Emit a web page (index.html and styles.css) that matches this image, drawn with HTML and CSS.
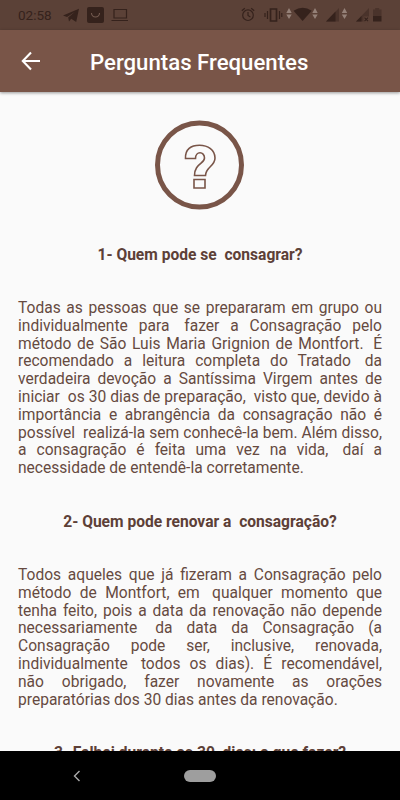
FILE: index.html
```html
<!DOCTYPE html>
<html lang="pt-BR">
<head>
    <meta charset="UTF-8">
    <meta name="viewport" content="width=device-width, initial-scale=1.0">
    <title>Perguntas Frequentes</title>
    <link rel="stylesheet" href="styles.css">
</head>
<body>

<div class="app">
    <div class="status-bar">
        <span class="clock">02:58</span>
        <svg class="status-icons" width="382" height="30" viewBox="18 0 382 30">
            <!-- telegram -->
            <path d="M63 15.5 79 8.8 76.2 22 71.2 18.8 69 21.6 68.2 17.6 75 11.8 67 16.9z"/>
            <!-- bag -->
            <rect x="87" y="7" width="17" height="16" rx="2"/>
            <path class="bag-line" d="M91.5 13a4 4 0 0 0 8 0"/>
            <!-- laptop -->
            <path class="line" d="M114 9.5h12.5v8.5H114zM111.5 20.5H128"/>
            <!-- alarm -->
            <circle class="line" cx="248" cy="15.2" r="5.3"/>
            <path class="line" d="M248 12v3.5l2.4 1.4M241.8 10.7l3-2.5M254.2 10.7l-3-2.5"/>
            <!-- vibrate -->
            <path class="line thick" d="M270.5 9h6v12h-6z"/>
            <path class="line" d="M267.5 11v8M265 13v4M279.5 11v8M281.8 13v4"/>
            <!-- wifi -->
            <path d="M293.5 10.8q9.3-6 18.2 0L302.6 21z"/>
            <!-- arrows -->
            <path class="arrow" d="M289 8l2.7 5h-5.4zM289 19l2.7-4.5h-5.4zM315 8l2.7 5h-5.4zM315 19l2.7-4.5h-5.4zM344.5 8l2.7 5h-5.4zM344.5 19l2.7-4.5h-5.4z"/>
            <!-- signal -->
            <path class="faint" d="M339 8v13.5h-13zM369 8v13.5h-13z"/>
            <path d="M335.5 11.6v9.9H326zM361.5 16v5.5H356z"/>
            <path class="signal-gap" d="M363.5 16.5h6v6h-6z"/>
            <path class="line" d="M364.5 17.7l3.5 3.5M368 17.7l-3.5 3.5"/>
            <!-- battery -->
            <path class="faint" d="M373 9.5h2.2V8h4v1.5h2.3V16H373z"/>
            <path d="M373 16h8.5v5.5H373z"/>
        </svg>
    </div>

    <div class="toolbar">
        <svg class="back" width="20" height="20" viewBox="0 0 20 20">
            <path d="M19 10H2M10 1.5 1.8 10l8.2 8.5"/>
        </svg>
        <h1 class="title">Perguntas Frequentes</h1>
    </div>

    <div class="content">
        <svg class="question-icon" width="90" height="90" viewBox="0 0 90 90">
            <circle cx="44.5" cy="45" r="42"/>
            <path d="M30.5 38.5C30 29 36 25.2 44.5 25.2S60 30 60 38C60 46.5 50.5 47 50.5 55.5H39.5C39.5 43.5 49.5 44 49.5 38C49.5 31 40.5 31 40.5 38.5zM39 59.5h11v8.5H39z"/>
        </svg>

        <h2 class="question">1- Quem pode se&nbsp; consagrar?</h2>
        <p class="answer">Todas as pessoas que se prepararam em grupo ou individualmente para &emsp14;fazer a Consagração pelo método de São Luis Maria Grignion de Montfort. &emsp14;É recomendado a leitura completa do Tratado &emsp14;da verdadeira devoção a Santíssima Virgem antes de iniciar &emsp14;os 30 dias de preparação, &emsp14;visto que, devido à importância e abrangência da consagração não é possível &emsp14;realizá-la sem conhecê-la bem. Além disso, a consagração é feita uma vez na vida, &emsp14;daí a necessidade de entendê-la corretamente.</p>

        <h2 class="question">2- Quem pode renovar a&nbsp; consagração?</h2>
        <p class="answer">Todos aqueles que já fizeram a Consagração pelo método de Montfort, em &emsp14;qualquer momento que tenha feito, pois a data da renovação não depende necessariamente &emsp14;da data da Consagração (a Consagração pode ser, inclusive, renovada, individualmente &emsp14;todos os dias). É recomendável, não obrigado, fazer novamente as orações preparatórias dos 30 dias antes da renovação.</p>

        <h2 class="question">3- Falhei durante os 30&nbsp; dias: o que fazer?</h2>
    </div>

    <div class="nav-bar">
        <svg class="nav-back" width="8" height="12" viewBox="0 0 8 12">
            <path d="M6.5 1 1.5 6l5 5"/>
        </svg>
        <div class="nav-home"></div>
    </div>
</div>

</body>
</html>
```
FILE: styles.css
```css
body {
    margin: 0;
    font-family: Roboto, sans-serif;
    background-color: #fafafa;
}

.app {
    display: flex;
    flex-direction: column;
    height: 800px;
    overflow: hidden;
}

.status-bar {
    display: grid;
    flex: none;
    height: 30px;
    padding-left: 18px;
    background-color: #5b4137;
    color: #35221c;
}

.clock {
    grid-area: 1 / 1;
    font-size: 13.5px;
    line-height: 31px;
}

.status-icons {
    grid-area: 1 / 1;
    fill: #35221c;
}

.line {
    fill: none;
    stroke: #35221c;
    stroke-width: 1.2;
}

.thick {
    stroke-width: 1.7;
}

.bag-line {
    fill: none;
    stroke: #755b50;
    stroke-width: 1.1;
}

.arrow {
    fill: #958178;
}

.faint {
    fill: #4a332b;
}

.signal-gap {
    fill: #5b4137;
}

.toolbar {
    display: flex;
    flex: none;
    align-items: center;
    height: 62px;
    padding-left: 21px;
    background-color: #795548;
    box-shadow: 0 1px 3px rgba(0, 0, 0, 0.4);
    z-index: 1;
}

.back {
    fill: none;
    stroke: #fff;
    stroke-width: 2.1;
}

.title {
    margin: 1px 0 0 49px;
    font-size: 22.2px;
    font-weight: 500;
    color: #fff;
}

.content {
    flex: 1;
    min-height: 0;
    padding: 28px 18px 0;
    overflow: hidden;
    color: #5d4037;
    font-size: 15.58px;
    line-height: 17.8px;
}

.question-icon {
    display: block;
    margin: 0 auto 36px;
    fill: none;
    stroke: #795548;
}

.question-icon circle {
    stroke-width: 5;
}

.question-icon path {
    stroke-width: 1.6;
}

.question {
    margin: 0 0 36px;
    font-size: 15.58px;
    font-weight: 700;
    line-height: 18px;
    text-align: center;
}

.answer {
    margin: 0 0 35px;
    color: #664a41;
    text-align: justify;
}

.nav-bar {
    display: grid;
    flex: none;
    grid-template-columns: 1fr 32px 1fr;
    align-items: center;
    height: 49px;
    background-color: #000;
}

.nav-back {
    margin-left: 73px;
    fill: none;
    stroke: #aaa;
    stroke-width: 1.4;
}

.nav-home {
    height: 12px;
    border-radius: 6px;
    background-color: #9e9e9e;
}
```
